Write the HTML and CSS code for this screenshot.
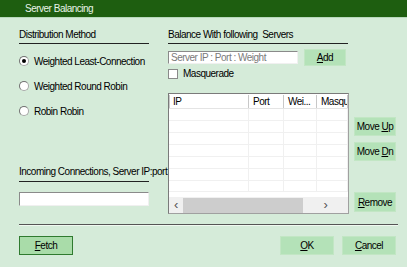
FILE: index.html
```html
<!DOCTYPE html>
<html lang="en">
  <head>
    <meta charset="UTF-8" />
    <title>Server Balancing</title>
    <link rel="stylesheet" href="styles.css">
  </head>
  <body>
    <div class="window">
      <div class="titlebar">Server Balancing</div>
      <div class="content">
        <div class="top">
          <div class="left">
            <div class="heading">Distribution Method</div>
            <div class="radios">
              <label class="radio checked"><span class="dot"></span>Weighted Least-Connection</label>
              <label class="radio"><span class="dot"></span>Weighted Round Robin</label>
              <label class="radio"><span class="dot"></span>Robin Robin</label>
            </div>
            <div class="heading incoming">Incoming Connections, Server IP:port</div>
            <div class="textbox wide"></div>
          </div>
          <div class="right">
            <div class="heading">Balance With following &nbsp;Servers</div>
            <div class="addrow">
              <div class="textbox server"><span class="placeholder">Server IP : Port : Weight</span></div>
              <button class="btn add"><u>A</u>dd</button>
            </div>
            <label class="check"><span class="box"></span>Masquerade</label>
            <div class="listrow">
              <div class="list">
                <div class="cols head">
                  <div>IP</div><div>Port</div><div>Wei...</div><div>Masqu</div>
                </div>
                <div class="cols"><div></div><div></div><div></div><div></div></div>
                <div class="cols"><div></div><div></div><div></div><div></div></div>
                <div class="cols"><div></div><div></div><div></div><div></div></div>
                <div class="cols"><div></div><div></div><div></div><div></div></div>
                <div class="cols"><div></div><div></div><div></div><div></div></div>
                <div class="cols"><div></div><div></div><div></div><div></div></div>
                <div class="cols last"><div></div><div></div><div></div><div></div></div>
                <div class="scrollbar">
                  <span class="arrow">&lsaquo;</span>
                  <span class="thumb"></span>
                  <span class="arrow right">&rsaquo;</span>
                </div>
              </div>
              <div class="side">
                <button class="btn">Move <u>U</u>p</button>
                <button class="btn">Move <u>D</u>n</button>
                <button class="btn remove"><u>R</u>emove</button>
              </div>
            </div>
          </div>
        </div>
        <div class="separator"></div>
        <div class="footer">
          <button class="btn default"><u>F</u>etch</button>
          <div class="spacer"></div>
          <button class="btn"><u>O</u>K</button>
          <button class="btn"><u>C</u>ancel</button>
        </div>
      </div>
    </div>
  </body>
</html>
```

FILE: styles.css
```css
body {
  margin: 0;
  font-family: "Liberation Sans", Arial, sans-serif;
  font-size: 10px;
  letter-spacing: -0.5px;
  color: #000;
  background: #d5ebd9;
}
.window {
  width: 407px;
  height: 267px;
  overflow: hidden;
  background: #d5ebd9;
}
.titlebar {
  height: 17px;
  line-height: 17px;
  background: #1e5e10;
  color: #e8f4e8;
  padding-left: 25px;
  border-bottom: 1px solid #b8d8bc;
}
.content {
  padding: 0 11px 0 19px;
}
.top {
  display: flex;
  gap: 19px;
  height: 195px;
}
.left {
  width: 130px;
  flex-shrink: 0;
  display: flex;
  flex-direction: column;
  padding-bottom: 7px;
  box-sizing: border-box;
}
.right {
  flex: 1;
  display: flex;
  flex-direction: column;
}
.heading {
  margin-top: 11px;
  padding-bottom: 2px;
  border-bottom: 1px solid #222;
  line-height: 12px;
  white-space: nowrap;
}
.right .heading {
  width: 180px;
}
.radios {
  display: flex;
  flex-direction: column;
  gap: 13px;
  margin-top: 11px;
}
.radio {
  display: flex;
  align-items: center;
  gap: 5px;
  height: 12px;
  white-space: nowrap;
}
.dot {
  flex-shrink: 0;
  width: 10px;
  height: 10px;
  border-radius: 50%;
  background: #fff;
  border: 1px solid #a8a8a8;
  border-top-color: #707070;
  border-left-color: #707070;
  box-sizing: border-box;
  position: relative;
}
.radio.checked .dot::after {
  content: "";
  position: absolute;
  left: 2px;
  top: 2px;
  width: 4px;
  height: 4px;
  border-radius: 50%;
  background: #000;
}
.incoming {
  margin-top: auto;
  padding-bottom: 3px;
}
.textbox {
  background: #fff;
  border: 1px solid #8a8a8a;
  border-right-color: #f0f0f0;
  border-bottom-color: #f0f0f0;
  box-sizing: border-box;
  height: 14px;
}
.textbox.wide {
  margin-top: 10px;
}
.addrow {
  display: flex;
  align-items: center;
  gap: 6px;
  margin-top: 5px;
}
.textbox.server {
  width: 130px;
  height: 13px;
  line-height: 11px;
  padding-left: 2px;
  white-space: nowrap;
  overflow: hidden;
}
.placeholder {
  color: #7a7a7a;
}
.btn {
  font: inherit;
  letter-spacing: inherit;
  background: #b4e2b8;
  border: 1px solid #c2e6c4;
  width: 54px;
  height: 19px;
  padding: 0;
  color: #000;
  white-space: nowrap;
  flex-shrink: 0;
}
.btn.add {
  width: 42px;
  height: 17px;
}
.btn.default {
  background: #a9dca9;
  border: 1px solid #2f7a2f;
}
.check {
  display: flex;
  align-items: center;
  gap: 5px;
  margin-top: 2px;
  height: 12px;
}
.box {
  flex-shrink: 0;
  width: 10px;
  height: 10px;
  background: #fff;
  border: 1px solid #8a8a8a;
  box-sizing: border-box;
}
.listrow {
  display: flex;
  gap: 5px;
  margin-top: 14px;
}
.list {
  width: 181px;
  height: 121px;
  flex-shrink: 0;
  background: #fff;
  border: 1px solid #7a7a7a;
  border-right-color: #a0a0a0;
  border-bottom-color: #a0a0a0;
  box-sizing: border-box;
  display: flex;
  flex-direction: column;
  overflow: hidden;
}
.cols {
  display: grid;
  grid-template-columns: 80px 35px 33px 31px;
  height: 11px;
  border-bottom: 1px solid #f0f0f0;
}
.cols > div {
  border-right: 1px solid #f0f0f0;
  padding-left: 4px;
  white-space: nowrap;
  overflow: hidden;
}
.cols.head {
  height: 13px;
  line-height: 13px;
  border-bottom: 1px solid #e4e4e4;
  margin-top: 1px;
}
.cols.head > div {
  border-right: 1px solid #c8c8c8;
}
.cols.head > div:first-child {
  border-left: 1px solid #c8c8c8;
  padding-left: 3px;
}
.cols.last {
  height: 10px;
}
.scrollbar {
  margin-top: auto;
  height: 16px;
  background: #f0f0f0;
  display: flex;
  align-items: center;
}
.arrow {
  width: 14px;
  text-align: center;
  font-size: 13px;
  line-height: 14px;
  color: #555;
}
.arrow.right {
  margin-left: auto;
}
.thumb {
  width: 120px;
  height: 15px;
  background: #cdcdcd;
}
.side {
  display: flex;
  flex-direction: column;
  gap: 6px;
  padding-top: 24px;
}
.side .btn {
  width: 42px;
}
.side .remove {
  margin-top: 25px;
  height: 20px;
}
.separator {
  border-top: 1px solid #555;
  border-bottom: 1px solid #f0f8f0;
  margin-top: 11px;
  width: 379px;
}
.footer {
  display: flex;
  gap: 8px;
  margin-top: 10px;
}
.spacer {
  flex: 1;
}
```
